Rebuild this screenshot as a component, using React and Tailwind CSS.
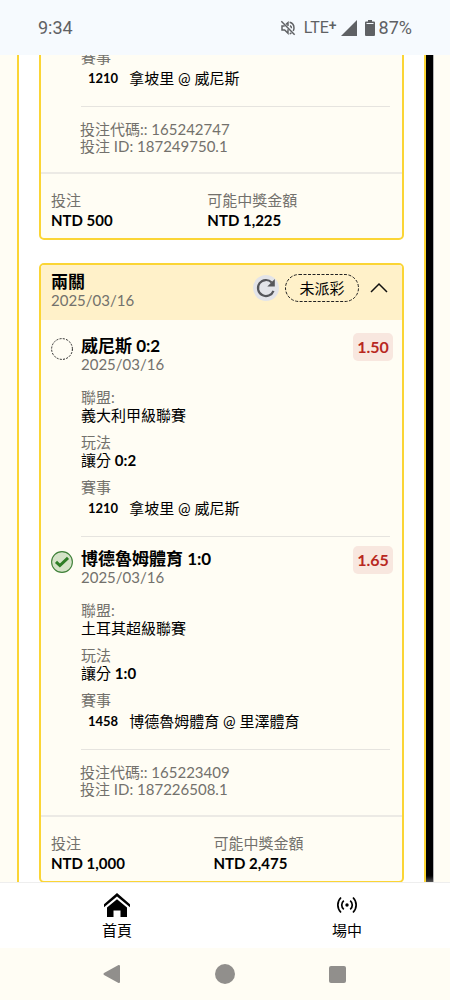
// src/pages/BetHistoryPage.jsx
import React, { useState } from 'react';

const bets = [
  {
    id: 'bet-1',
    code: '165242747',
    betId: '187249750.1',
    stake: 'NTD 500',
    payout: 'NTD 1,225',
    selections: [{ eventNo: '1210', match: '拿坡里 @ 威尼斯', partial: true }],
  },
  {
    id: 'bet-2',
    type: '兩關',
    date: '2025/03/16',
    status: '未派彩',
    code: '165223409',
    betId: '187226508.1',
    stake: 'NTD 1,000',
    payout: 'NTD 2,475',
    selections: [
      {
        team: '威尼斯 0:2',
        date: '2025/03/16',
        odds: '1.50',
        league: '義大利甲級聯賽',
        market: '讓分',
        score: '0:2',
        eventNo: '1210',
        match: '拿坡里 @ 威尼斯',
        won: false,
      },
      {
        team: '博德魯姆體育 1:0',
        date: '2025/03/16',
        odds: '1.65',
        league: '土耳其超級聯賽',
        market: '讓分',
        score: '1:0',
        eventNo: '1458',
        match: '博德魯姆體育 @ 里澤體育',
        won: true,
      },
    ],
  },
];

const StatusBar = () => (
  <header className="flex h-[55px] shrink-0 items-center bg-[#f6fafe] px-[38px] font-['Roboto',sans-serif] text-lg text-[#5f6164]">
    <span className="grow">9:34</span>
    <svg viewBox="0 0 24 24" className="mr-2 h-4 w-4" fill="none" stroke="currentColor" strokeWidth="2.200">
      <path d="M2 2l20 20" />
      <path d="M7 9H3v6h4l5 5v-6M9 6.500l3-2.500v5" />
      <path d="M15 8.500c1.500.8 2.200 2 2.200 4M14.500 3.500c4 1 6.500 4.500 6.500 8.500 0 1.800-.5 3.200-1.200 4.500M14.500 20.500c1-.2 1.800-.6 2.600-1" />
    </svg>
    <span className="text-base">LTE</span>
    <span className="pb-1.5 text-sm leading-none font-medium">+</span>
    <svg viewBox="0 0 16 16" className="ml-1 h-4 w-4" fill="currentColor">
      <path d="M16 0v16H0z" />
    </svg>
    <svg viewBox="0 0 10 16" className="mr-1 ml-2 h-4 w-2.5" fill="currentColor">
      <path d="M3 0h4v1.500h2a1 1 0 0 1 1 1V15a1 1 0 0 1-1 1H1a1 1 0 0 1-1-1V2.500a1 1 0 0 1 1-1h2z" />
      <path d="M1.500 3.500h7" stroke="#f6fafe" strokeWidth="1" />
    </svg>
    <span>87%</span>
  </header>
);

const ResultIcon = ({ won }) =>
  won ? (
    <svg viewBox="0 0 22 22" className="mt-px h-[22px] w-[22px] shrink-0">
      <circle cx="11" cy="11" r="10.400" fill="#d5e3c8" stroke="#3f8038" strokeWidth="1.100" />
      <path d="M5 10.800l3.900 3.700 8.100-7.700" fill="none" stroke="#2e7d26" strokeWidth="3" />
    </svg>
  ) : (
    <svg viewBox="0 0 22 22" className="mt-px h-[22px] w-[22px] shrink-0">
      <circle cx="11" cy="11" r="10.400" fill="none" stroke="#222" strokeWidth="1" strokeDasharray="2 1.300" />
    </svg>
  );

const EventInfo = ({ eventNo, match }) => (
  <div>
    <dt className="text-[#73716c]">賽事</dt>
    <dd className="flex h-6 items-center pl-[7px]">
      <span className="mr-[11px] text-[13px] font-bold">{eventNo}</span>
      {match}
    </dd>
  </div>
);

const Selection = ({ selection }) => {
  if (selection.partial) {
    return (
      <li className="mr-3 ml-10 border-b border-[#e6e4df] pb-4">
        <dl>
          <EventInfo eventNo={selection.eventNo} match={selection.match} />
        </dl>
      </li>
    );
  }

  return (
    <li className="flex gap-2 pt-[13px] pl-2.5">
      <ResultIcon won={selection.won} />
      <div className="mr-3 min-w-0 grow border-b border-[#e6e4df] pb-4">
        <div className="flex h-9 justify-between">
          <div>
            <h3 className="text-[17px] leading-[18px] font-bold">{selection.team}</h3>
            <p className="text-[#73716c]">{selection.date}</p>
          </div>
          <span className="-mt-1 -mr-[3px] flex h-7 w-10 items-center justify-center rounded-[5px] bg-[#f8e7df] text-base font-bold text-[#b8281f]">
            {selection.odds}
          </span>
        </div>
        <dl className="mt-[15px] flex flex-col gap-[9px]">
          <div>
            <dt className="text-[#73716c]">聯盟:</dt>
            <dd>{selection.league}</dd>
          </div>
          <div>
            <dt className="text-[#73716c]">玩法</dt>
            <dd>
              {selection.market} <b>{selection.score}</b>
            </dd>
          </div>
          <EventInfo eventNo={selection.eventNo} match={selection.match} />
        </dl>
      </div>
    </li>
  );
};

const BetCard = ({ bet }) => {
  const [open, setOpen] = useState(true);

  return (
    <article className="shrink-0 overflow-hidden rounded-[5px] border-2 border-[#fbd535] bg-[#fffdf4]">
      {bet.type && (
        <div className="mb-1 flex h-[55px] items-center bg-[#fff1c9] pr-3.5 pl-2.5">
          <div className="mb-1 grow">
            <h2 className="text-[17px] leading-[18px] font-bold">{bet.type}</h2>
            <p className="text-[#73716c]">{bet.date}</p>
          </div>
          <button type="button" aria-label="重新整理" className="mb-2.5 flex h-[26px] w-[26px] items-center justify-center rounded-full bg-[#e3e4e8] text-[#55565a]">
            <svg viewBox="0 0 20 20" className="h-5 w-5" fill="none" stroke="currentColor" strokeWidth="2.200">
              <path d="M17.500 12.800A8 8 0 1 1 15.700 4.400" />
              <path d="M18.800 1v7.500h-7.500z" fill="currentColor" stroke="none" />
            </svg>
          </button>
          <span className="relative mb-2.5 ml-1.5 flex h-7 w-[74px] items-center justify-center">
            <svg className="absolute inset-0 h-full w-full" fill="none">
              <rect x="0.500" y="0.500" width="73" height="27" rx="13.500" stroke="#222" strokeDasharray="3 1.500" />
            </svg>
            {bet.status}
          </span>
          <button type="button" aria-label="收合" onClick={() => setOpen(!open)} className="mb-2.5 ml-[11px] flex h-[18px] w-[18px] items-center justify-center">
            <svg viewBox="0 0 18 18" className="h-[18px] w-[18px]" fill="none" stroke="#111" strokeWidth="1.500">
              <path d="M1 13l8-8 8 8" />
            </svg>
          </button>
        </div>
      )}

      {open && (
        <>
          <ul>
            {bet.selections.map((selection, index) => (
              <Selection key={index} selection={selection} />
            ))}
          </ul>
          <div className="border-b-2 border-[#eceae5] pt-3.5 pb-[17px] pl-[39px] leading-[17px] text-[#73716c]">
            <p>投注代碼:: {bet.code}</p>
            <p>投注 ID: {bet.betId}</p>
          </div>
        </>
      )}

      {/* Stake and payout */}
      <dl className="grid grid-cols-[auto_auto] px-2.5 pt-4 pb-2 leading-5">
        <div>
          <dt className="text-[#73716c]">投注</dt>
          <dd className="font-bold">{bet.stake}</dd>
        </div>
        <div>
          <dt className="text-[#73716c]">可能中獎金額</dt>
          <dd className="font-bold">{bet.payout}</dd>
        </div>
      </dl>
    </article>
  );
};

const BottomNav = () => (
  <nav className="z-10 grid h-[66px] shrink-0 grid-cols-2 gap-6 border-t border-[#eeeeee] bg-white pl-3.5">
    <a href="#home" className="flex flex-col items-center pt-2.5">
      <svg viewBox="0 0 26 24" className="h-6 w-[26px]">
        <path d="M0 11.200L13 0l13 11.200v3L13 3.600 0 14.200z" />
        <path d="M3 14.600L13 6.300l10 8.300V24h-6.500v-6.500h-7V24H3z" />
      </svg>
      <span className="mt-1">首頁</span>
    </a>
    <a href="#live" className="flex flex-col items-center pt-2.5">
      <svg viewBox="0 0 24 24" className="h-6 w-6" fill="none" stroke="#000" strokeWidth="1.700">
        <circle cx="12" cy="12" r="1.700" fill="#000" stroke="none" />
        <path d="M8.800 7.600a5.700 5.700 0 0 0 0 8.800M15.200 7.600a5.700 5.700 0 0 1 0 8.800M6 4.500a10.500 10.500 0 0 0 0 15M18 4.500a10.500 10.500 0 0 1 0 15" />
      </svg>
      <span className="mt-1">場中</span>
    </a>
  </nav>
);

const SystemNav = () => (
  <div className="grid h-[52px] shrink-0 grid-cols-3 items-center justify-items-center bg-[#fffdf4] px-14 text-[#918f8c]">
    <button type="button" aria-label="返回">
      <svg viewBox="0 0 18 20" className="h-5 w-[18px]" fill="currentColor" stroke="currentColor" strokeWidth="2" strokeLinejoin="round">
        <path d="M1.500 10L16 2v16z" />
      </svg>
    </button>
    <button type="button" aria-label="主畫面" className="h-5 w-5 rounded-full bg-current" />
    <button type="button" aria-label="最近" className="h-[17px] w-[17px] rounded-[2px] bg-current" />
  </div>
);

const App = () => {
  return (
    <div className="flex h-screen flex-col bg-[#fffdf4] font-['Lato','Noto_Sans_CJK_TC',sans-serif] text-[15px] leading-[18px] text-black">
      <StatusBar />

      <main className="flex min-h-0 grow pr-4 pl-[17px]">
        {/* The last card runs on under the bottom nav */}
        <section className="-mb-px flex grow flex-col justify-end gap-[23px] overflow-hidden border-x-2 border-[#fbd535] bg-white px-5">
          {bets.map((bet) => (
            <BetCard key={bet.id} bet={bet} />
          ))}
        </section>
        <div className="w-2 border-r border-[#b5b5b5] bg-linear-to-t from-[#555] to-black to-[8px]" />
      </main>

      <BottomNav />
      <SystemNav />
    </div>
  );
};

export default App;
